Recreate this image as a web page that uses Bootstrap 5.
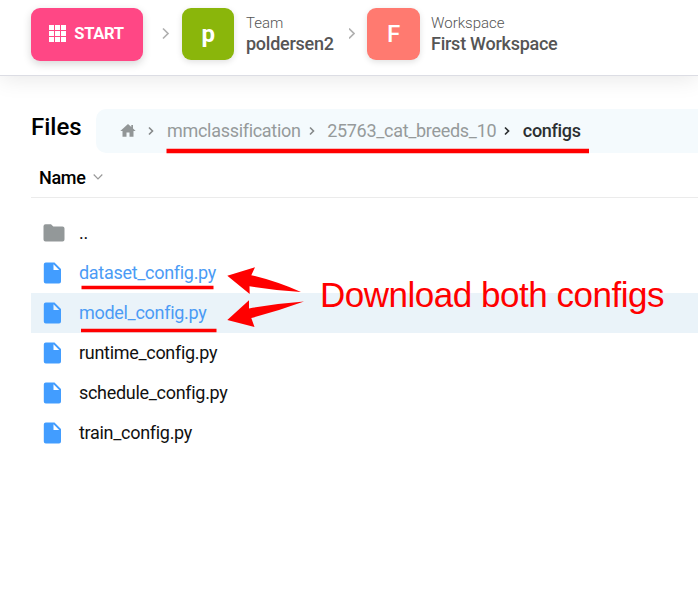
<!DOCTYPE html>
<html lang="en">
<head>
<meta charset="utf-8">
<meta name="viewport" content="width=device-width, initial-scale=1">
<title>Files</title>
<link href="https://cdn.jsdelivr.net/npm/bootstrap@5.3.0/dist/css/bootstrap.min.css" rel="stylesheet">
<style>
body{font-family:Roboto,"Liberation Sans",sans-serif;font-size:18px;letter-spacing:-.3px;color:#000;background:#fff;overflow:hidden;height:590px}
svg{display:block;flex:none}
.topbar{height:76px;padding:8px 0 0 31px;border-bottom:1px solid #dcdde4;box-shadow:0 2px 22px rgba(0,0,0,.1)}
.start-btn,.start-btn:hover{width:112px;height:53px;border:0;border-radius:9px;background:#ff4785;color:#fff;font-weight:700;font-size:16.5px;letter-spacing:-.3px;padding:0 1px 3px 0;box-shadow:0 3px 9px rgba(0,0,0,.16)}
.start-label{padding-top:2px}
.avatar{width:52px;height:52px;border-radius:9px;color:#fff;font-weight:700;font-size:24px;box-shadow:0 2px 6px rgba(0,0,0,.12);flex:none}
.avatar-team{background:#8ab60b;margin-left:12px}
.avatar-space{background:#ff7a70;margin-left:12px;width:53px;font-weight:500}
.crumb-sep{margin-left:19px}
.crumb-sep-2{margin-left:14px}
.org{margin-left:11px;padding-top:5px;white-space:nowrap}
.org-team{width:89px;margin-left:12px}
.org-kind{font-size:15px;line-height:20px;font-weight:300;color:#555;letter-spacing:0}
.org-name{font-size:18px;line-height:22px;font-weight:500;color:#555;letter-spacing:-.25px}
.files-head{height:44px;margin:33px 0 0 31px}
.files-title{font-size:24px;font-weight:500;width:65px;margin:0;line-height:36px;letter-spacing:0}
.path-bar{background:#f4fafd;border-radius:10px 0 0 10px;padding-left:24px;color:#969a9b;white-space:nowrap}
.path-bar span{padding-bottom:2px}
.path-bar .current{color:#2b2f31;font-weight:500}
.home-sep{margin-left:8px;margin-right:7px}
.path-sep{margin-left:4px;margin-right:4.500px}
.sort-row{height:45px;margin-left:31px;padding:4px 0 0 8px;border-bottom:1px solid #ebebeb;font-weight:500}
.sort-icon{margin-left:7px}
.file-list{margin:15px 0 0 31px}
.file-row,.file-row:first-child,.file-row:last-child{height:40px;border:0;border-radius:0;padding:0 0 0 12px;background:transparent;color:#111}
.file-row .file-name{margin-left:14px;padding-bottom:2px}
.file-row.picked{color:#4b9bf5}
.file-row.hovered{background:#eaf3f9}
.notes{left:0;top:0}
.note-text{font-family:"Liberation Sans",Arial,sans-serif;font-size:35px;letter-spacing:-.48px;line-height:40px;color:#f00;left:320px;top:275px;white-space:nowrap}
</style>
<script src="https://cdn.jsdelivr.net/npm/bootstrap@5.3.0/dist/js/bootstrap.bundle.min.js"></script>
</head>
<body class="position-relative">
<svg width="0" height="0" class="position-absolute" aria-hidden="true">
  <symbol id="doc" viewBox="0 0 18 22"><path fill="#429dff" fill-rule="evenodd" d="M2.800.5H11.500L18 7V19.500a2 2 0 0 1-2 2H2.800a2 2 0 0 1-2-2V2.500a2 2 0 0 1 2-2zM10.500 2.300V8h5.700z"/></symbol>
</svg>

<header class="topbar d-flex align-items-start">
  <button class="btn start-btn d-flex align-items-center justify-content-center" type="button">
    <svg width="17" height="17" viewBox="0 0 17 17" fill="#fff" class="me-2"><path d="M0 0h5v5H0zM6 0h5v5H6zM12 0h5v5h-5zM0 6h5v5H0zM6 6h5v5H6zM12 6h5v5h-5zM0 12h5v5H0zM6 12h5v5H6zM12 12h5v5h-5z"/></svg><span class="start-label">START</span>
  </button>
  <svg class="crumb-sep align-self-start mt-3" width="8" height="17" viewBox="0 0 8 17"><path d="M1 4.500l5 5-5 5" fill="none" stroke="#b0b0b0" stroke-width="1.700"/></svg>
  <div class="avatar avatar-team d-flex align-items-center justify-content-center">p</div>
  <div class="org org-team"><div class="org-kind">Team</div><div class="org-name">poldersen2</div></div>
  <svg class="crumb-sep-2 align-self-start mt-3" width="6" height="17" viewBox="1 0 6 17"><path d="M1 4.500l5 5-5 5" fill="none" stroke="#b0b0b0" stroke-width="1.700"/></svg>
  <div class="avatar avatar-space d-flex align-items-center justify-content-center">F</div>
  <div class="org"><div class="org-kind">Workspace</div><div class="org-name">First Workspace</div></div>
</header>

<main>
  <div class="files-head d-flex">
    <h1 class="files-title">Files</h1>
    <nav class="path-bar flex-grow-1 d-flex align-items-center" aria-label="Path">
      <svg width="16" height="14" viewBox="0 0 16 14"><path fill="#929697" d="M8 0L.3 7H2.500V12.800H6.500V8.500h3v4.300h4V7h2.200L13 4.500V1h-1.700v2z"/></svg>
      <svg class="home-sep" width="16" height="12" viewBox="0 0 16 12"><path d="M5 2.500l3.500 3.500L5 9.500" fill="none" stroke="#858889" stroke-width="1.600"/></svg>
      <span>mmclassification</span>
      <svg class="path-sep" width="18" height="12" viewBox="0 0 18 12"><path d="M5 2.500l3.500 3.500L5 9.500" fill="none" stroke="#858889" stroke-width="1.600"/></svg>
      <span>25763_cat_breeds_10</span>
      <svg class="path-sep" width="18" height="12" viewBox="0 0 18 12"><path d="M5 2.500l3.500 3.500L5 9.500" fill="none" stroke="#2b2f31" stroke-width="1.700"/></svg>
      <span class="current">configs</span>
    </nav>
  </div>
  <div class="sort-row d-flex align-items-center">Name
    <svg class="sort-icon" width="10" height="8" viewBox="0 0 10 8"><path d="M.7 1.500L5 5.800l4.300-4.300" fill="none" stroke="#999" stroke-width="1.200"/></svg>
  </div>
  <div class="list-group file-list">
    <div class="list-group-item file-row d-flex align-items-center"><svg width="22" height="18" viewBox="0 0 22 18"><path fill="#939899" d="M2.500.3H8L10.300 2.500H19.500a2 2 0 0 1 2 2V15.500a2 2 0 0 1-2 2H2.500a2 2 0 0 1-2-2V2.300a2 2 0 0 1 2-2z"/></svg><span class="file-name">..</span></div>
    <div class="list-group-item file-row picked d-flex align-items-center"><svg width="18" height="22" class="me-1"><use href="#doc"/></svg><span class="file-name">dataset_config.py</span></div>
    <div class="list-group-item file-row picked hovered d-flex align-items-center"><svg width="18" height="22" class="me-1"><use href="#doc"/></svg><span class="file-name">model_config.py</span></div>
    <div class="list-group-item file-row d-flex align-items-center"><svg width="18" height="22" class="me-1"><use href="#doc"/></svg><span class="file-name">runtime_config.py</span></div>
    <div class="list-group-item file-row d-flex align-items-center"><svg width="18" height="22" class="me-1"><use href="#doc"/></svg><span class="file-name">schedule_config.py</span></div>
    <div class="list-group-item file-row d-flex align-items-center"><svg width="18" height="22" class="me-1"><use href="#doc"/></svg><span class="file-name">train_config.py</span></div>
  </div>
</main>

<svg class="notes position-absolute" width="698" height="590" viewBox="0 0 698 590" aria-hidden="true">
  <g stroke="#f00"><path stroke-width="4.400" d="M166.500 151H589"/><path stroke-width="3.400" d="M81.500 287.500H213.500M81 330.500H216.500"/></g>
  <g fill="#f00"><path d="M227.300 275.800L255 267.200L251.300 275.200Q276 281 301 292Q275 290.500 249.500 286.200L249.700 294z"/><path d="M227.300 320L249 300.200V308.500Q276 303.500 304 301.500Q278 311 251.300 318L254.500 327z"/></g>
</svg>
<div class="note-text position-absolute">Download both configs</div>
</body>
</html>
